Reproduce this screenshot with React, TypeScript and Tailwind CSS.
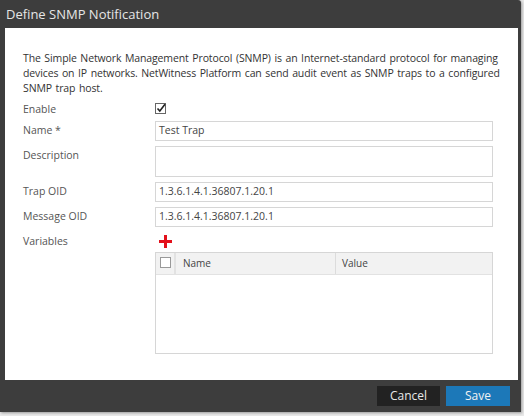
import React from "react";

export default function App() {
  const font = { fontFamily: '"Open Sans", "Noto Sans", sans-serif' };
  return (
    <div className="w-[524px] h-[416px] bg-[#e9e9e9] relative overflow-hidden" style={font}>
      <div className="w-[521px] h-[412px] bg-[#3d3d3d] rounded-tr-[3px] flex flex-col shadow-[1px_1px_3px_rgba(0,0,0,0.35)]">
        <div className="h-[28px] pl-[6px] flex items-center text-[13px] text-[#e6e6e6] leading-none">
          Define SNMP Notification
        </div>
        <div className="ml-[5px] mr-[3px] h-[352px] bg-white pl-[18px] pr-[12px] pt-[23px] text-[10.5px] text-[#444] flex flex-col">
          <p className="leading-[15px] text-[#333] text-[10.5px] tracking-[-0.12px] [word-spacing:1px] w-[480px]">
            The Simple Network Management Protocol (SNMP) is an Internet-standard protocol for managing devices on IP networks. NetWitness Platform can send audit event as SNMP traps to a configured SNMP trap host.
          </p>
          <div className="flex items-center h-[20px] mt-[4px]">
            <div className="w-[132px] text-[#555]">Enable</div>
            <svg width="11" height="11" viewBox="0 0 11 11" className="-mt-[4px]">
              <rect x="0.5" y="0.5" width="10" height="10" fill="white" stroke="#666" />
              <path d="M2.5 5.5 L4.8 8 L10 1.2" stroke="#222" strokeWidth="1.6" fill="none" />
            </svg>
          </div>
          <div className="flex items-center mt-[1px]">
            <div className="w-[132px] text-[#555]">Name *</div>
            <div className="w-[338px] h-[20px] border border-[#d6d6d6] px-[3px] flex items-center text-[#444]">Test Trap</div>
          </div>
          <div className="flex items-start mt-[5px]">
            <div className="w-[132px] text-[#555] pt-[2px]">Description</div>
            <div className="w-[338px] h-[31px] border border-[#d6d6d6]"></div>
          </div>
          <div className="flex items-center mt-[5px]">
            <div className="w-[132px] text-[#555]">Trap OID</div>
            <div className="w-[338px] h-[20px] border border-[#d6d6d6] px-[3px] flex items-center text-[#444]">1.3.6.1.4.1.36807.1.20.1</div>
          </div>
          <div className="flex items-center mt-[5px]">
            <div className="w-[132px] text-[#555]">Message OID</div>
            <div className="w-[338px] h-[20px] border border-[#d6d6d6] px-[3px] flex items-center text-[#444]">1.3.6.1.4.1.36807.1.20.1</div>
          </div>
          <div className="flex items-center mt-[6px] h-[17px]">
            <div className="w-[132px] text-[#555]">Variables</div>
            <svg width="13" height="13" viewBox="0 0 13 13" className="ml-[4px]">
              <rect x="5" y="0" width="3" height="13" fill="#e3101b" />
              <rect x="0" y="5" width="13" height="3" fill="#e3101b" />
            </svg>
          </div>
          <div className="flex mt-[2px]">
            <div className="w-[132px]"></div>
            <div className="w-[338px] h-[102px] border border-[#d6d6d6] flex flex-col">
              <div className="h-[22px] bg-[#f2f2f2] border-b border-[#e2e2e2] flex text-[10px] text-[#444]">
                <div className="w-[20px] border-r-2 border-[#e2e2e2] flex justify-center pt-[4px]">
                  <div className="w-[11px] h-[11px] border border-[#999] bg-white"></div>
                </div>
                <div className="w-[160px] border-r border-[#dcdcdc] pl-[7px] flex items-center">Name</div>
                <div className="flex-1 pl-[6px] flex items-center">Value</div>
              </div>
            </div>
          </div>
        </div>
        <div className="flex justify-end gap-[6px] pr-[11px] pt-[6px]">
          <div className="w-[63px] h-[20px] bg-[#222222] text-[#e8e8e8] text-[12px] flex items-center justify-center">Cancel</div>
          <div className="w-[64px] h-[20px] bg-[#1c78b8] text-[#f2f2f2] text-[12px] flex items-center justify-center">Save</div>
        </div>
      </div>
    </div>
  );
}
